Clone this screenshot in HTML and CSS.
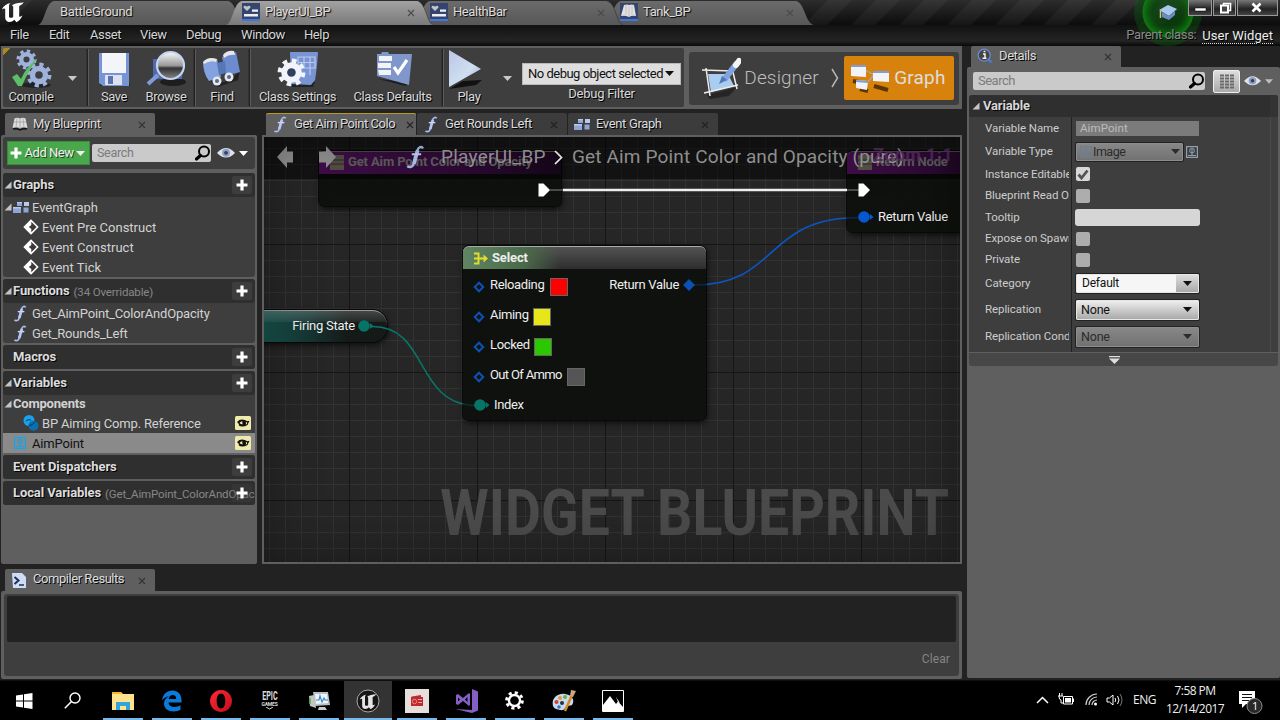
FILE: index.html
```html
<!DOCTYPE html>
<html lang="en">
<head>
<meta charset="utf-8">
<title>PlayerUI_BP</title>
<link rel="stylesheet" href="styles.css">
</head>
<body>
<svg class="defs" width="0" height="0">
  <defs>
    <linearGradient id="gTab" x1="0" y1="0" x2="0" y2="1"><stop offset="0" stop-color="#6b6b6b"/><stop offset="1" stop-color="#575757"/></linearGradient>
    <linearGradient id="gTabOn" x1="0" y1="0" x2="0" y2="1"><stop offset="0" stop-color="#a2a2a2"/><stop offset="1" stop-color="#7a7a7a"/></linearGradient>
    <linearGradient id="gPlay" x1="0" y1="0" x2="1" y2="1"><stop offset="0" stop-color="#bcc6e6"/><stop offset=".6" stop-color="#cfe0f0"/><stop offset="1" stop-color="#8ea4d0"/></linearGradient>
    <linearGradient id="gLens" x1="0" y1="0" x2="0" y2="1"><stop offset="0" stop-color="#fafafa"/><stop offset=".5" stop-color="#999"/><stop offset=".6" stop-color="#333"/><stop offset="1" stop-color="#888"/></linearGradient>
    <linearGradient id="gOpera" x1="0" y1="0" x2="1" y2="1"><stop offset="0" stop-color="#ff2a36"/><stop offset="1" stop-color="#c00d1c"/></linearGradient>
    <radialGradient id="gGlow"><stop offset="0" stop-color="#041" stop-opacity=".1"/><stop offset=".6" stop-color="#064a08" stop-opacity=".5"/><stop offset="1" stop-color="#0d8a10" stop-opacity=".85"/></radialGradient>
    <linearGradient id="gWire" gradientUnits="userSpaceOnUse" x1="427" y1="0" x2="595" y2="0"><stop offset=".09" stop-color="#0a55c4" stop-opacity=".3"/><stop offset=".1" stop-color="#0a55c4"/><stop offset=".92" stop-color="#0a55c4"/><stop offset=".93" stop-color="#0a55c4" stop-opacity=".3"/></linearGradient>
    <linearGradient id="gTeal" gradientUnits="userSpaceOnUse" x1="105" y1="0" x2="212" y2="0"><stop offset=".87" stop-color="#08756a"/><stop offset=".88" stop-color="#08756a" stop-opacity=".3"/></linearGradient>
  </defs>
  <symbol id="x" viewBox="0 0 8 8"><path d="M1 1l6 6M7 1L1 7" stroke="currentColor" stroke-width="1.100" fill="none"/></symbol>
  <symbol id="down" viewBox="0 0 9 5"><path d="M0 0h9L4.500 5z" fill="currentColor"/></symbol>
  <symbol id="tri" viewBox="0 0 8 8"><path d="M7.500 .5v7h-7z" fill="#c4c4c4"/></symbol>
  <symbol id="plus" viewBox="0 0 12 12"><path d="M4.400 .5h3.200v3.900h3.900v3.200H7.600v3.900H4.400V7.600H.5V4.400h3.900z" fill="#fff"/></symbol>
  <symbol id="mag" viewBox="0 0 16 16"><circle cx="9" cy="6.500" r="5" fill="none" stroke="#000" stroke-width="2"/><path d="M5.500 10.500L1.500 14" stroke="#000" stroke-width="3.200" stroke-linecap="round"/></symbol>
  <symbol id="eye" viewBox="0 0 18 12"><path d="M0 6Q9-4 18 6Q9 15 0 6z" fill="#dfe3e6"/><circle cx="9" cy="5.800" r="4" fill="#8ea0c8"/><circle cx="9" cy="5.800" r="1.900" fill="#33405c"/></symbol>
  <symbol id="f" viewBox="0 0 14 18"><path d="M13 2.600C12 .6 9.600 1.300 8.800 4L6 14c-.8 2.800-3.200 3.200-4.800 1.800" fill="none" stroke="#a9bdf0" stroke-width="1.800"/><path d="M9 4L6.200 14" stroke="#b6c7f4" stroke-width="2.800"/><path d="M4.600 7h7" stroke="#c9d6fa" stroke-width="1.500"/></symbol>
  <symbol id="graph" viewBox="0 0 16 13"><path d="M4 1h5v4H4zM0 6h8v6H0zM10.500 6.500h5v5h-5z" fill="#8fa5d8"/><path d="M4 1h5v1.300H4zM0 6h8v1.500H0zM11 1h5v4h-5z" fill="#b9c8ee"/></symbol>
  <symbol id="event" viewBox="0 0 16 16"><path d="M8 .3L15.700 8 8 15.700.3 8z" fill="#fff"/><path d="M8.300 2.700L13.600 8l-5.300 5.300V10L5.800 8l2.500-2z" fill="#3b3b3b"/></symbol>
  <symbol id="book" viewBox="0 0 16 14"><path d="M2.500 1.500Q5 0 8 1.500 11 0 13.500 1.500L15.500 11Q11 9.500 8 11.500 5 9.500.5 11z" fill="#dedede"/><path d="M1 12q4-1 7 1 3-2 7-1" stroke="#111" stroke-width="1.500" fill="none"/><path d="M8 2v9M5 1.500L4 10M11 1.500l1 8.500M2 5h12" stroke="#999" stroke-width=".7"/></symbol>
  <symbol id="widget" viewBox="0 0 18 18"><path d="M0 0h18v18H0z" fill="#34466f"/><path d="M0 16h18v2H0z" fill="#3f76e0"/><path d="M5 8L1.500 4.500Q1.500 1.500 5 3.500 8.500 1.500 8.500 4.500z" fill="#c0c5cb"/><path d="M10 6.500h6v2.200h-6zM2 11h14v2.500H2z" fill="#eee"/></symbol>
  <symbol id="bigeye" viewBox="0 0 16 14"><rect width="16" height="14" rx="1.500" fill="#efebaa"/><path d="M2 6Q6 1.500 12.500 5.200L14.500 4.800 12.500 9Q7 12 3.500 9.200 5 9 2 6z" fill="#111"/><path d="M4.500 7q1.500-2 3-1.800-.9 2 .5 3Q6 8.500 4.500 7zM11.500 6q1 1 .5 2l-1.500.6q1.200-1 .2-2.600z" fill="#efebaa"/></symbol>
  <symbol id="img" viewBox="0 0 12 12"><path d="M.6.6h10.800v10.800H.6z" fill="none" stroke="currentColor" stroke-width="1.200"/><circle cx="6" cy="4.600" r="2.400" fill="none" stroke="currentColor"/><path d="M2 9.500h8M6 5v4.500M4.700 4h2.600" stroke="currentColor"/></symbol>
  <symbol id="ue" viewBox="0 0 24 22"><path d="M.8 8.500C2.500 5 5.500 2.700 9.500 2 8 3.200 8 4 8 5.500v9.800c0 1.700 2.200 2.100 4.200.6V6c0-1-.6-1.500-1.500-1.500 2-1.500 4.600-2.300 6.800-2.600 2-.3 3.800-.3 5.200-1-1 2.600-2.600 3-4.500 4v10.600c.8.500 2 0 3.300-1C19.700 18.500 17.500 20 15.500 21.200l-2.300-2.500c-3 3.400-9 3-9-2.200V8.500C4.200 7 3 7 .8 8.500z" fill="currentColor"/></symbol>
  <symbol id="gear" viewBox="0 0 24 24"><circle cx="12" cy="12" r="6" fill="none" stroke="currentColor" stroke-width="5"/><circle cx="12" cy="12" r="9.700" fill="none" stroke="currentColor" stroke-width="3.600" stroke-dasharray="3.810 3.810"/></symbol>
</svg>

<header class="titlebar">
  <svg class="tabshapes" width="1280" height="25">
    <g fill="#fff" opacity=".045"><path d="M12 0h20L8 25h-20zM828 0h24l-25 25h-24zM876 0h24l-25 25h-24zM924 0h24l-25 25h-24zM972 0h24l-25 25h-24zM1020 0h24l-25 25h-24zM1068 0h24l-25 25h-24zM1116 0h24l-25 25h-24zM1164 0h24l-25 25h-24z"/></g>
    <path d="M38 25C45 23 45 3 54 1H228C237 3 237 23 244 25z" fill="url(#gTab)"/>
    <path d="M605 25C612 23 612 3 621 1H796C805 3 805 23 814 25z" fill="url(#gTab)"/>
    <path d="M414 25C421 23 421 3 430 1H607C616 3 616 23 623 25z" fill="url(#gTab)"/>
    <path d="M607 1C616 3 616 23 623 25M417 1C426 3 426 23 433 25" fill="none" stroke="#3c3c3c" stroke-width=".8"/>
    <path d="M226 25C233 23 233 3 242 1H417C426 3 426 23 433 25z" fill="url(#gTabOn)"/>
  </svg>
  <svg class="uelogo" width="24" height="22"><use href="#ue"/></svg>
  <div class="wtab w1"><span>BattleGround</span></div>
  <div class="wtab w2"><svg width="18" height="18"><use href="#widget"/></svg><span>PlayerUI_BP</span><svg class="close" width="8" height="8"><use href="#x"/></svg></div>
  <div class="wtab w3"><svg width="18" height="18"><use href="#widget"/></svg><span>HealthBar</span><svg class="close" width="8" height="8"><use href="#x"/></svg></div>
  <div class="wtab w4"><svg width="18" height="18" viewBox="0 0 18 18"><path d="M0 0h18v18H0z" fill="#34466f"/><path d="M0 16h18v2H0z" fill="#3f76e0"/><path d="M4 2q3-1 5 0 3-1 5 0l2 11q-4-1-7 1-4-2-8-1z" fill="#e2e2e2"/><path d="M6 2v10M9 3v10M12 2v10" stroke="#aaa" stroke-width=".6"/></svg><span>Tank_BP</span><svg class="close" width="8" height="8"><use href="#x"/></svg></div>
  <div class="winbtns">
    <svg width="24" height="15"><path d="M6 8h11v3H6z" fill="#fff" stroke="#000" stroke-width=".5"/></svg>
    <svg width="23" height="15"><path d="M9.500 3.500h7v7h-7z" fill="none" stroke="#fff" stroke-width="1.600"/><path d="M7 5.500h7v7H7z" fill="#444" stroke="#fff" stroke-width="2"/></svg>
    <svg width="41" height="15"><path d="M14.500 3.500l8 8M22.500 3.500l-8 8" stroke="#fff" stroke-width="2.600"/></svg>
  </div>
</header>
<nav class="menubar">
  <span class="m1">File</span><span class="m2">Edit</span><span class="m3">Asset</span><span class="m4">View</span><span class="m5">Debug</span><span class="m6">Window</span><span class="m7">Help</span>
  <span class="parent">Parent class:</span><span class="uw">User Widget</span>
</nav>
<svg class="glow" width="72" height="48" viewBox="0 0 72 48"><circle cx="36" cy="12" r="34" fill="#0a6a0c" opacity=".34"/><circle cx="36" cy="12" r="25.500" fill="url(#gGlow)"/><path d="M27 10l9-5 9 4-8 7z" fill="#a9c8ee"/><path d="M30 12v5l7 3 6-5v-4l-6 5z" fill="#6a8cc0"/><path d="M28.500 11v7" stroke="#e0c080" stroke-width="1.500"/></svg>

<main class="main">
  <div class="left">
    <section class="toolrow">
      <div class="tools">
        <div class="tool t-compile"><svg width="44" height="42" viewBox="0 0 44 42"><ellipse cx="27" cy="37" rx="15" ry="3" fill="#111" opacity=".6"/><g color="#9fb2dc"><svg x="7" y="1" width="21" height="21"><use href="#gear"/></svg><svg x="17" y="14" width="26" height="26"><use href="#gear"/></svg></g><path d="M3 29l5-3 4 5Q17 19 29 10 19 23 13 38H9z" fill="#5cbf67"/></svg><span>Compile</span></div>
        <div class="arr"><svg width="9" height="5"><use href="#down"/></svg></div><i class="sep"></i>
        <div class="tool t-save"><svg width="44" height="42" viewBox="0 0 44 42"><path d="M7 34h30l1 4H9z" fill="#111" opacity=".7"/><path d="M7 5h30v33H11l-4-3z" fill="#7795d6"/><path d="M10 5h24v20H10z" fill="#f4f5f9"/><path d="M13 27h17v10H13z" fill="#dce2ef"/><path d="M16 28h5v8h-5z" fill="#5a74ae"/></svg><span>Save</span></div>
        <div class="tool t-browse"><svg width="44" height="42" viewBox="0 0 44 42"><ellipse cx="29" cy="34" rx="13" ry="4" fill="#111" opacity=".7"/><path d="M9 11l30 0-1 20H9z" fill="#4e6aab"/><path d="M14 27L4 36" stroke="#7f9bdb" stroke-width="4"/><circle cx="26.500" cy="17.500" r="13.500" fill="url(#gLens)" stroke="#c6d4f2" stroke-width="2.200"/></svg><span>Browse</span></div><i class="sep"></i>
        <div class="tool t-find"><svg width="44" height="42" viewBox="0 0 44 42"><path d="M6 30q18 12 34-8l-2 10-20 7z" fill="#111" opacity=".6"/><path d="M3 14l14-3 4 18-12 4q-6-8-6-19z" fill="#84a1e0"/><path d="M22 9l14-5 4 20-14 4z" fill="#6d8ccf"/><path d="M3 14q5-6 14-3l-1 3q-6-2-12 2zM23 7q4-5 11-4l1 4q-6-1-11 3z" fill="#e7e7e7"/><path d="M17 15l8-2 1 12-7 2z" fill="#5776b6"/><circle cx="17" cy="33" r="4.500" fill="#e4e8f0"/><circle cx="17" cy="33" r="2" fill="#5c6984"/><circle cx="29" cy="29" r="4.500" fill="#e4e8f0"/><circle cx="29" cy="29" r="2" fill="#5c6984"/></svg><span>Find</span></div><i class="sep"></i>
        <div class="tool t-cs"><svg width="44" height="42" viewBox="0 0 44 42"><path d="M12 34h27l-2 5H14z" fill="#111" opacity=".6"/><path d="M14 4h28q-1 17-3 28l-4 5-20-1z" fill="#7894d2"/><path d="M22 9h17v11H22zM22 14.500h17M28 9v11M34 9v18" stroke="#b8c9ee" stroke-width="1.200" fill="none"/><g color="#f1f4fa"><svg x="1" y="10" width="29" height="29"><use href="#gear"/></svg></g><circle cx="15.500" cy="24.500" r="4" fill="#30405c"/></svg><span>Class Settings</span></div>
        <div class="tool t-cd"><svg width="44" height="42" viewBox="0 0 44 42"><path d="M7 31l30 3-2 4z" fill="#111" opacity=".7"/><path d="M6 6h4l1-2h6l1 2h23l-3 31-32-9z" fill="#8097cb"/><path d="M8 8h13v5H8zM7 15h13v5H7zM7 22h13v5H8z" fill="#f2f4fa"/><path d="M23 19l4 6L36 12" stroke="#fff" stroke-width="3.200" fill="none"/></svg><span>Class Defaults</span></div><i class="sep"></i>
        <div class="tool t-play"><svg width="44" height="42" viewBox="0 0 44 42"><path d="M2 41l14-8 19-1-6 5z" fill="#111"/><path d="M2 2l32 19L2 39z" fill="url(#gPlay)"/></svg><span>Play</span></div>
        <div class="arr"><svg width="9" height="5"><use href="#down"/></svg></div>
        <div class="debug"><div class="dcombo"><span>No debug object selected</span><svg width="9" height="5"><use href="#down"/></svg></div><span class="dlabel">Debug Filter</span></div>
      </div>
      <div class="modes">
        <div class="designer"><svg width="42" height="42" viewBox="0 0 42 42"><path d="M8 38l30-8-8 9-19 3z" fill="#000" opacity=".4"/><path d="M9 17l20 0 6 12-23 6z" fill="#a9cdf0"/><path d="M3 13l30 1M7 11l4 28M33 11l5 21M5 36l34-8" stroke="#eee" stroke-width="1.500"/><path d="M25 23L38 6" stroke="#7fa4e0" stroke-width="6"/><path d="M37 8l3-4" stroke="#f4f4f4" stroke-width="6" stroke-linecap="round"/><path d="M20 27l3-8 5 4z" fill="#5079b8"/></svg><span>Designer</span></div>
        <svg class="chev" width="8" height="20"><path d="M1 1l5.500 9L1 19" fill="none" stroke="#b4b4b4" stroke-width="1.500"/></svg>
        <div class="graphbtn"><svg width="40" height="32" viewBox="0 0 40 32"><path d="M3 19l10 2M10 27l8 2M24 24l14 4" stroke="#5b3502" stroke-width="4"/><path d="M15 8l9 5M17 21l7-8" stroke="#aaa" stroke-width="1.200"/><path d="M1 3h15v12l-15-1zM23 9h16v11l-16-1zM6 18l12 1-1 9-11-2z" fill="#f2f3f7"/><path d="M1 3h15v2H1zM23 9h16v2H23zM6 18l12 1v2L6 20z" fill="#7f9cd8"/></svg><span>Graph</span></div>
      </div>
    </section>

    <div class="middle">
      <aside class="bp">
        <div class="tab bptab"><svg width="16" height="14"><use href="#book"/></svg><span>My Blueprint</span><svg class="close" width="8" height="8"><use href="#x"/></svg></div>
        <div class="frame bpframe">
          <div class="bptools">
            <div class="addnew"><svg width="12" height="12"><use href="#plus"/></svg><span>Add New</span><svg width="9" height="5"><use href="#down"/></svg></div>
            <div class="search"><span>Search</span><svg width="16" height="16"><use href="#mag"/></svg></div>
            <svg width="18" height="12"><use href="#eye"/></svg><svg class="white" width="9" height="5"><use href="#down"/></svg>
          </div>
          <div class="sec">
            <div class="sh"><svg width="8" height="8"><use href="#tri"/></svg><b>Graphs</b><i class="add"><svg width="12" height="12"><use href="#plus"/></svg></i></div>
            <div class="row r0"><svg class="t" width="8" height="8"><use href="#tri"/></svg><svg width="16" height="13"><use href="#graph"/></svg><span>EventGraph</span></div>
            <div class="row r1"><svg width="16" height="16"><use href="#event"/></svg><span>Event Pre Construct</span></div>
            <div class="row r1"><svg width="16" height="16"><use href="#event"/></svg><span>Event Construct</span></div>
            <div class="row r1"><svg width="16" height="16"><use href="#event"/></svg><span>Event Tick</span></div>
          </div>
          <div class="sec">
            <div class="sh"><svg width="8" height="8"><use href="#tri"/></svg><b>Functions</b><small>(34 Overridable)</small><i class="add"><svg width="12" height="12"><use href="#plus"/></svg></i></div>
            <div class="row rf"><svg width="14" height="17"><use href="#f"/></svg><span class="snug">Get_AimPoint_ColorAndOpacity</span></div>
            <div class="row rf"><svg width="14" height="17"><use href="#f"/></svg><span class="snug">Get_Rounds_Left</span></div>
          </div>
          <div class="sec"><div class="sh bare"><b>Macros</b><i class="add"><svg width="12" height="12"><use href="#plus"/></svg></i></div></div>
          <div class="sec">
            <div class="sh"><svg width="8" height="8"><use href="#tri"/></svg><b>Variables</b><i class="add"><svg width="12" height="12"><use href="#plus"/></svg></i></div>
            <div class="row comp"><svg class="t" width="8" height="8"><use href="#tri"/></svg><b>Components</b></div>
            <div class="row r1"><svg width="16" height="16" viewBox="0 0 16 16"><circle cx="6" cy="5.500" r="5.500" fill="#1ba0ea"/><circle cx="10.500" cy="10.800" r="5" fill="#0b6fae"/><path d="M3 6q2-2 5-1M6 10.500q4 0 6-4" stroke="#063a60" fill="none" stroke-width="1"/></svg><span class="snug">BP Aiming Comp. Reference</span><svg class="vis" width="16" height="14"><use href="#bigeye"/></svg></div>
            <div class="row rf sel"><svg class="im" width="12" height="12"><use href="#img"/></svg><span class="snug">AimPoint</span><svg class="vis" width="16" height="14"><use href="#bigeye"/></svg></div>
          </div>
          <div class="sec"><div class="sh bare"><b>Event Dispatchers</b><i class="add"><svg width="12" height="12"><use href="#plus"/></svg></i></div></div>
          <div class="sec"><div class="sh bare"><b>Local Variables</b><small class="local">(Get_AimPoint_ColorAndOpacity)</small><i class="add over"><svg width="12" height="12"><use href="#plus"/></svg></i></div></div>
        </div>
      </aside>

      <section class="graphcol">
        <div class="gtabs">
          <div class="tab gt on"><svg width="14" height="17"><use href="#f"/></svg><span>Get Aim Point Colo</span><svg class="close" width="8" height="8"><use href="#x"/></svg></div>
          <div class="tab gt off"><svg width="14" height="17"><use href="#f"/></svg><span>Get Rounds Left</span><svg class="close" width="8" height="8"><use href="#x"/></svg></div>
          <div class="tab gt off ev"><svg width="16" height="13"><use href="#graph"/></svg><span>Event Graph</span><svg class="close" width="8" height="8"><use href="#x"/></svg></div>
        </div>
        <div class="canvas">
          <div class="mark">WIDGET BLUEPRINT</div>
          <div class="node n-entry"><div class="nh purple"><svg width="14" height="15" viewBox="0 0 14 15"><path d="M0 0h14v15H0z" fill="#a09784"/><path d="M0 5h14M0 9h14" stroke="#5c5248" stroke-width="1"/></svg><span>Get Aim Point Color and Opacity</span></div></div>
          <div class="node n-ret"><div class="nh purple"><svg width="14" height="15" viewBox="0 0 14 15"><path d="M0 0h14v15H0z" fill="#a0a08a"/><path d="M0 5h14M0 9h14" stroke="#5c5a48" stroke-width="1"/></svg><span>Return Node</span></div><div class="rv"><svg width="16" height="12"><circle cx="6" cy="6" r="5.800" fill="#0558d0"/><path d="M12 3l3.500 3-3.500 3z" fill="#0558d0"/></svg><span>Return Value</span></div></div>
          <div class="node n-fire"><span>Firing State</span><svg width="16" height="12"><circle cx="6" cy="6" r="5.800" fill="#077468"/><path d="M12 3l3.500 3-3.500 3z" fill="#077468"/></svg></div>
          <div class="node n-sel">
            <div class="nh green"><svg width="16" height="13" viewBox="0 0 16 13"><path d="M1 1.500h4.500v10H1M1 6.500h8" stroke="#e0dc30" stroke-width="2" fill="none"/><path d="M8 6.500h3" stroke="#e0dc30" stroke-width="2"/><path d="M10.500 2.500l4.500 4-4.500 4z" fill="#e0dc30"/></svg><span>Select</span></div>
            <div class="pins">
              <div class="pin"><i class="dia"></i><span>Reloading</span><i class="sw red"></i><em>Return Value</em><i class="dia full"></i></div>
              <div class="pin"><i class="dia"></i><span>Aiming</span><i class="sw yellow"></i></div>
              <div class="pin"><i class="dia"></i><span>Locked</span><i class="sw lime"></i></div>
              <div class="pin"><i class="dia"></i><span class="ammo">Out Of Ammo</span><i class="sw gray"></i></div>
              <div class="pin idx"><svg width="16" height="12"><circle cx="6" cy="6" r="5.800" fill="#077468"/><path d="M12 3l3.500 3-3.500 3z" fill="#077468"/></svg><span>Index</span></div>
            </div>
          </div>
          <svg class="wires" width="696" height="425">
            <path d="M299 53H583" stroke="#f0f0f0" stroke-width="2.400"/>
            <path d="M286 53h13M583 53h13" stroke="#fff" stroke-opacity=".25" stroke-width="2"/>
            <path d="M430 148C515 148 500 80.500 595 80.500" fill="none" stroke="url(#gWire)" stroke-width="1.600"/>
            <path d="M108 189.500C165 189 150 267.500 212 268.500" fill="none" stroke="url(#gTeal)" stroke-width="1.500"/>
          </svg>
          <div class="crumbs">
            <svg width="60" height="22"><path d="M0 11L10 0v5.500h6v11h-6V22z" fill="#929292"/><path d="M59 11L49 0v5.500h-7v11h7V22z" fill="#929292"/></svg>
            <svg class="bigf" width="20" height="24" viewBox="0 0 14 18"><use href="#f" width="14" height="18"/></svg>
            <span class="c1">PlayerUI_BP</span>
            <svg class="cc" width="9" height="15"><path d="M1 1l6.500 6.500L1 14" fill="none" stroke="#fff" stroke-width="1.700"/></svg>
            <span class="c2">Get Aim Point Color and Opacity (pure)</span>
            <span class="zoom">Zoom 1:1</span>
          </div>
          <svg class="exec" width="560" height="14"><path d="M.5.500h5L12 7l-6.500 6.500h-5zM320.500.500h5L332 7l-6.500 6.500h-5z" fill="#fff"/></svg>
        </div>
      </section>
    </div>

    <section class="results">
      <div class="tab bptab"><svg width="14" height="15" viewBox="0 0 14 15"><path d="M0 0h10l4 4v11H1z" fill="#cfdcf6"/><path d="M2.500 4l4 3.500-4 3.500" stroke="#1c3156" stroke-width="2" fill="none"/><path d="M7 12h5" stroke="#1c3156" stroke-width="1.500"/></svg><span class="cr">Compiler Results</span><svg class="close" width="8" height="8"><use href="#x"/></svg></div>
      <div class="frame resframe"><div class="resbox"><div class="log"></div><span>Clear</span></div></div>
    </section>
  </div>

  <aside class="details">
    <div class="tab dtab"><svg width="16" height="16" viewBox="0 0 16 16"><path d="M10.500 10.500l4 4" stroke="#4e77cc" stroke-width="2.600"/><circle cx="7.200" cy="7.200" r="6" fill="#444" stroke="#6a8bd6" stroke-width="1.200"/><path d="M6 6h2v4M5.500 10.300h4M6.600 3.500h1.800" stroke="#f0f0f0" stroke-width="1.500" fill="none"/></svg><span>Details</span><svg class="close" width="8" height="8"><use href="#x"/></svg></div>
    <div class="frame dframe">
      <div class="dtop">
        <div class="search big"><span>Search</span><svg width="16" height="16"><use href="#mag"/></svg></div>
        <div class="gridbtn"><svg width="14" height="15"><path d="M0 1.500h14M0 4.500h14M0 7.500h14M0 10.500h14M0 13.500h14" stroke="#6a6a6a" stroke-width="1.800" stroke-dasharray="4 1"/></svg></div>
        <svg width="17" height="12"><use href="#eye"/></svg><svg class="lite" width="8" height="5"><use href="#down"/></svg>
      </div>
      <div class="dh"><svg width="8" height="8"><use href="#tri"/></svg><b>Variable</b></div>
      <div class="props">
        <div class="p h23"><label>Variable Name</label><div class="v"><div class="name">AimPoint</div></div></div>
        <div class="p h23"><label>Variable Type</label><div class="v"><div class="combo type"><svg width="12" height="12"><use href="#img"/></svg><span>Image</span><svg width="9" height="5"><use href="#down"/></svg></div><svg class="im2" width="12" height="12"><use href="#img"/></svg></div></div>
        <div class="p h22"><label>Instance Editable</label><div class="v"><i class="cb on"><svg width="12" height="12"><path d="M1.500 6.500l3 3.500L10.500 2.500" fill="none" stroke="#555" stroke-width="2.800"/></svg></i></div></div>
        <div class="p h21"><label>Blueprint Read Only</label><div class="v"><i class="cb"></i></div></div>
        <div class="p h22"><label>Tooltip</label><div class="v"><div class="tip"></div></div></div>
        <div class="p h21"><label>Expose on Spawn</label><div class="v"><i class="cb"></i></div></div>
        <div class="p h21"><label>Private</label><div class="v"><i class="cb"></i></div></div>
        <div class="p h26"><label>Category</label><div class="v"><div class="combo cat"><span>Default</span><svg width="9" height="5"><use href="#down"/></svg></div></div></div>
        <div class="p h27"><label>Replication</label><div class="v"><div class="combo"><span>None</span><svg width="9" height="5"><use href="#down"/></svg></div></div></div>
        <div class="p h27"><label>Replication Condition</label><div class="v"><div class="combo dis"><span>None</span><svg width="9" height="5"><use href="#down"/></svg></div></div></div>
      </div>
      <div class="expand"><svg width="11" height="8"><path d="M0 0h11v1.200H0zM0 2.500h11L5.500 8z" fill="#ddd"/></svg></div>
    </div>
  </aside>
</main>

<footer class="taskbar">
  <div class="ti"><svg width="17" height="16"><path d="M0 2.500l7-1v6H0zM8 1.300L16.500 0v7.500H8zM0 8.500h7v6l-7-1zM8 8.500h8.500V16L8 14.800z" fill="#fff"/></svg></div>
  <div class="ti srch"><svg width="17" height="17"><circle cx="11" cy="6" r="5" fill="none" stroke="#fff" stroke-width="1.400"/><path d="M7.500 9.500L.8 16.200" stroke="#fff" stroke-width="1.500"/></svg></div>
  <div class="app"><svg width="22" height="20"><path d="M0 1h9l2 2h11v16H0z" fill="#ffe28c"/><path d="M0 1h9l1 2H0z" fill="#f4b62a"/><path d="M4 19v-8h14v8h-4v-4H8v4z" fill="#2fa4dd"/></svg></div>
  <div class="app"><svg width="22" height="22"><path d="M1 10.500C2 4 6 .5 11.500.5 17 .5 20.500 4.500 20.500 10v2.500H7.500c.2 3 3 4.500 6 4.500 2.200 0 4-.5 6-1.700v4.500C17.500 21 15.500 21.500 13 21.500 7 21.500 3 18.500 3 13.500c0-3 1.700-5.500 5-7.300C5 6.500 3 7.800 1 10.500zM7.700 9h7.500c0-2.500-1.200-4-3.500-4S8 6.700 7.700 9z" fill="#0a7bdc"/></svg></div>
  <div class="app"><svg width="22" height="22"><path fill-rule="evenodd" d="M11 0a11 11 0 1 0 .01 0zM11 3.500c2.800 0 4.300 3.500 4.300 7.500s-1.500 7.500-4.300 7.500-4.300-3.500-4.300-7.500S8.200 3.500 11 3.500z" fill="url(#gOpera)"/></svg></div>
  <div class="app"><div class="epic"><b>EPIC</b><u>GAMES</u><svg width="7" height="3"><path d="M0 0l3.500 2L7 0" fill="none" stroke="#ddd"/></svg></div></div>
  <div class="app"><svg width="22" height="20"><path d="M1 5l5-1 2 13-6-2z" fill="#bfc5c0"/><path d="M5 1h15l2 13-15 1z" fill="#b9bfc4"/><path d="M7 3h12l1 9-12 1z" fill="#eef4fa"/><path d="M8 9l3 0 1-4 2 6 2-4 1 2h3" fill="none" stroke="#3a86c8" stroke-width="1.200"/><path d="M11 16h6l2 3h-9z" fill="#ccc"/><path d="M2 7v6" stroke="#5eae52" stroke-width="1.500"/></svg></div>
  <div class="app active"><svg width="24" height="24" viewBox="0 0 24 24"><circle cx="12" cy="12" r="11" fill="#161616" stroke="#aaa"/><svg x="3" y="4" width="18" height="17" color="#e4e4e4"><use href="#ue"/></svg></svg></div>
  <div class="app"><svg width="24" height="24"><path d="M0 0h24v24H0z" fill="#e6dedd"/><path d="M7 7.500l9-1.500v2h2v9H6V8z" fill="#c1272d"/><circle cx="9.500" cy="12.500" r="2.200" fill="none" stroke="#e58a8c"/><path d="M13 10.500h4M13.500 13.500h3.500" stroke="#e9b0b0" stroke-width="1.200"/></svg></div>
  <div class="app"><svg width="24" height="24"><path d="M18 0l6 2.500v19L18 24 1 20l17 1z" fill="#865fc5"/><path d="M2 6l2-1 5 4 6-5 1 1v11l-1 1-6-5-5 4-2-1zM4 8.500v4L6 10.500zM13.500 8L11 10.500l2.500 2.500z" fill="#865fc5" fill-rule="evenodd"/></svg></div>
  <div class="app"><svg width="19" height="19" viewBox="0 0 24 24"><circle cx="12" cy="12" r="7" fill="none" stroke="#fff" stroke-width="3"/><circle cx="12" cy="12" r="10" fill="none" stroke="#fff" stroke-width="3.600" stroke-dasharray="3.927 3.927"/></svg></div>
  <div class="app"><svg width="24" height="24"><path d="M1 17C-1 9 6 4 13 5s9 5 8 9-4 2-6 3-2 5-7 4-6-2-7-4z" fill="#c4dcee"/><circle cx="4.500" cy="13" r="2" fill="#d04030"/><circle cx="8" cy="9" r="2" fill="#e8963a"/><circle cx="13" cy="8" r="2" fill="#67b246"/><circle cx="10" cy="14" r="2" fill="#27303e"/><circle cx="7" cy="18" r="1.800" fill="#3f6cc8"/><path d="M13 22l7-16" stroke="#d9852a" stroke-width="2.500"/><path d="M18 7l1-6 5 1-3 6z" fill="#cda87a"/></svg></div>
  <div class="app"><svg width="22" height="22"><path d="M.5.5h21v21H.5z" fill="#000" stroke="#fff"/><path d="M1 21v-6l7-9 6 8 2-2.500 5 5.500v4z" fill="#fff"/><path d="M14 7l4 6-2-1z" fill="#fff"/></svg></div>
  <div class="tray">
    <svg width="13" height="8"><path d="M1 7l5.500-5.500L12 7" fill="none" stroke="#fff" stroke-width="1.500"/></svg>
    <svg class="y2" width="16" height="13"><path d="M5.500 3.500h9v7.500h-9z" fill="none" stroke="#fff"/><path d="M7 5h6v4.500H7zM14.500 5.500H16v3.500h-1.500z" fill="#fff"/><path d="M0 3h5M1.500 0v3M4 0v3M1 3q0 4 2 4v3h3" stroke="#fff" fill="none"/></svg>
    <svg class="y3" width="14" height="13"><path d="M1 12A11 11 0 0 1 12 1M4 12a8 8 0 0 1 8-8M7 12a5 5 0 0 1 5-5" fill="none" stroke="#ccc" stroke-width="1.200"/><circle cx="10.500" cy="11" r="1.500" fill="#fff"/></svg>
    <svg class="y4" width="17" height="14"><path d="M1 5h2.500L7 2v10L3.500 9H1z" fill="none" stroke="#fff"/><path d="M9 5q1.500 2 0 4M11.500 3q3 4 0 8" stroke="#fff" fill="none"/><path d="M14 1q4 6 0 12" stroke="#777" fill="none"/></svg>
    <span class="eng">ENG</span>
    <div class="clock"><span class="k1">7:58 PM</span><span class="k2">12/14/2017</span></div>
    <svg class="note" width="26" height="26"><path d="M1 2h16v13H8l-4 4v-4H1z" fill="#fff"/><path d="M4 5.500h10M4 8.500h10M4 11.500h7" stroke="#111"/><circle cx="16.500" cy="17" r="7.500" fill="#292929" stroke="#8a8a8a"/><text class="one" x="14" y="21">1</text></svg>
  </div>
</footer>
</body>
</html>
```
FILE: styles.css
```css
* { box-sizing: border-box; }
body { margin: 0; width: 1280px; height: 720px; overflow: hidden; display: flex; flex-direction: column; position: relative; background: #222; color: #d8d8d8; font: 13px/16px Roboto, "Liberation Sans", sans-serif; letter-spacing: -.4px; white-space: nowrap; }
.defs { position: absolute; }
svg { display: block; flex: none; }
i, em { font-style: normal; }

.titlebar { height: 25px; flex: none; display: flex; position: relative; background: linear-gradient(#2c2c2c, #0c0c0c); text-shadow: 1px 1px 1px #000; }
.tabshapes { position: absolute; left: 0; top: 0; }
.uelogo { color: #fff; position: relative; margin: 1px 0 0 1px; }
.wtab { position: relative; display: flex; align-items: center; height: 24px; gap: 5px; color: #ddd; }
.w1 { width: 217px; padding-left: 35px; letter-spacing: -.3px; }
.w2 { width: 188px; }
.w3 { width: 190px; }
.w4 { width: 189px; }
.w2, .w3 { letter-spacing: -.42px; }
.wtab .close { margin: 2px 15px 0 auto; color: #4a4a4a; }
.winbtns { display: flex; position: absolute; right: 2px; top: 0; z-index: 3; gap: 1px; }
.winbtns svg { border: 1px solid #999; border-top: 0; background: linear-gradient(#777, #222 60%, #444); height: 16px; }

.menubar { height: 21px; flex: none; display: flex; align-items: center; background: linear-gradient(#111, #242424 75%, #080808); color: #d6d6d6; text-shadow: 1px 1px 0 #000; position: relative; padding-left: 10px; padding-bottom: 2px; }
.m1 { width: 39px; } .m2 { width: 41px; } .m3 { width: 50px; } .m4 { width: 46px; } .m5 { width: 55px; } .m6 { width: 63px; }
.parent { margin-left: auto; color: #8b8b8b; letter-spacing: -.35px; margin-right: 6px; position: relative; z-index: 3; }
.uw { color: #eee; border-bottom: 1px dotted #ddd; line-height: 14px; margin: 3px 7px 0 0; letter-spacing: .05px; }
.glow { position: absolute; left: 1132px; top: 0; z-index: 2; }

.main { flex: none; height: 634px; display: flex; }
.left { width: 963px; display: flex; flex-direction: column; }
.toolrow { height: 63px; display: flex; background: #5f5f5f; padding: 2px 3px 2px 2px; width: 962px; gap: 4px; border-left: 1px solid #222; }
.tools { width: 682px; margin-right: 1px; background: linear-gradient(135deg, #a78a25 0, #a78a25 5px, transparent 5px), #3e3e3e; border-radius: 2px; display: flex; text-shadow: 1px 1px 0 #000; }
.tool { display: flex; flex-direction: column; align-items: center; }
.tool span { margin-top: -1px; }
.t-compile { width: 56px; } .t-save { width: 50px; } .t-browse { width: 54px; } .t-find { width: 52px; } .t-cs { width: 93px; } .t-cd { width: 97px; } .t-play { width: 50px; }
.arr { width: 27px; display: flex; justify-content: center; padding-top: 28px; color: #c8c8c8; }
.sep { width: 3px; background: linear-gradient(90deg, #333 1px, #222 1px 2px, #5b5b5b 2px); margin: 1px 0; }
.debug { padding-top: 15px; margin-left: 1px; width: 159px; text-align: center; }
.dcombo { height: 22px; border: 1px solid #b9b9b9; background: #dedede; color: #111; display: flex; align-items: center; text-shadow: none; padding: 0 6px 1px 5px; justify-content: space-between; letter-spacing: -.5px; }
.dlabel { display: block; margin-top: 1px; letter-spacing: -.25px; }
.modes { width: 270px; height: 53px; margin-top: 4px; background: #3e3e3e; border-radius: 3px; display: flex; align-items: center; font-size: 19px; font-weight: 300; letter-spacing: .15px; color: #bdbdbd; padding-bottom: 1px; }
.designer { display: flex; align-items: center; padding-left: 10px; gap: 3px; width: 141px; }
.designer span, .graphbtn span { padding-bottom: 1px; }
.chev { margin: 0 5px 0 1px; }
.graphbtn { width: 110px; height: 44px; background: #d8820e; border-radius: 2px; display: flex; align-items: center; padding-left: 6px; gap: 4px; font-weight: 400; color: #ddd; }

.tab { display: flex; align-items: center; height: 22px; width: 150px; background: #5f5f5f; border-radius: 2px 2px 0 0; text-shadow: 1px 1px 0 #000; color: #dcdcdc; }
.tab .close { margin: 2px 9px 0 auto; color: #333; }
.frame { background: #5f5f5f; border-radius: 2px; }
.middle { display: flex; height: 455px; padding-top: 4px; }
.bp { width: 262px; }
.bptab { margin-left: 5px; padding-left: 7px; gap: 5px; }
.cr { margin-left: 2px; letter-spacing: -.45px; padding-bottom: 2px; }
.bpframe { margin-left: 1px; width: 256px; height: 429px; padding: 2px; display: flex; flex-direction: column; gap: 2px; }
.bptools { height: 32px; background: #3e3e3e; border-radius: 3px; display: flex; align-items: center; padding-left: 4px; margin-bottom: 2px; }
.bptools > .white { margin-left: 4px; color: #fff; }
.bptools > svg:nth-child(3) { margin-left: 6px; }
.addnew { flex: none; width: 83px; height: 24px; background: #49a84c; border: 1px solid #388c3b; display: flex; align-items: center; padding: 0 4px 0 2px; color: #f0f0f0; text-shadow: 1px 1px 0 #1c441d; justify-content: space-between; letter-spacing: -.5px; }
.search { flex: none; width: 119px; height: 18px; margin-left: 2px; background: #cacaca; border-radius: 2px; display: flex; align-items: center; justify-content: space-between; padding: 0 0 0 5px; color: #7c7c7c; font-size: 12.500px; letter-spacing: -.3px; }
.sec { background: #3e3e3e; border-radius: 3px; }
.sh { height: 24px; background: #2f2f2f; border-radius: 3px; display: flex; align-items: center; padding-left: 1px; position: relative; overflow: hidden; text-shadow: 1px 1px 0 #000; color: #ddd; letter-spacing: -.1px; }
.sh b { margin-left: 1px; }
.sh.bare { padding-left: 9px; }
.sh small { font-size: 11.500px; color: #878787; margin: 2px 0 0 4px; letter-spacing: -.15px; text-shadow: none; }
.add { width: 20px; height: 18px; margin-left: auto; margin-right: 3px; background: #3d3d3d; border-radius: 2px; display: grid; place-items: center; }
.add.over { position: absolute; right: 0; background: rgba(70,70,70,.3); }
.row { height: 20px; display: flex; align-items: center; letter-spacing: 0; color: #d2d2d2; }
.row span { padding-top: 1px; }
.row .t { margin: 0 1px 0 1px; }
.r0 span { margin-left: 3px; letter-spacing: -.05px; }
.r1 { padding-left: 20px; }
.r1 span { margin-left: 3px; }
.rf { padding-left: 10px; }
.rf span { margin-left: 5px; }
.row .snug { letter-spacing: -.17px; }
.comp { height: 18px; letter-spacing: -.2px; }
.comp .t { margin-right: 1px; }
.row .vis { margin-left: auto; margin-right: 4px; }
.sel { background: #8a8a8a; color: #111; }
.im { color: #13a4ec; margin: 0 1px; }

.graphcol { width: 700px; }
.gtabs { display: flex; gap: 1px; padding-left: 4px; }
.gt { padding-left: 7px; gap: 7px; }
.gt.on { box-shadow: inset 0 1px 0 #b59b20; letter-spacing: -.45px; }
.gt.off { background: #3c3c3c; }
.gt .close { margin-right: 9px; color: #222; }
.gt.on .close { margin-left: 4px; }
.gt.ev { padding-left: 6px; gap: 6px; letter-spacing: -.35px; }
.canvas { height: 429px; border: 2px solid #5f5f5f; position: relative; overflow: hidden; background-color: #262626;
  background-image: linear-gradient(90deg, #151515 1px, transparent 1px), linear-gradient(#151515 1px, transparent 1px), linear-gradient(90deg, #323232 1px, transparent 1px), linear-gradient(#323232 1px, transparent 1px);
  background-size: 128px 128px, 128px 128px, 16px 16px, 16px 16px; background-position: 85px 107px; }
.canvas::after { content: ""; position: absolute; inset: 0; box-shadow: inset 0 0 55px rgba(0,0,0,.35); }
.mark { position: absolute; right: 11px; top: 338px; font-size: 65px; line-height: 76px; font-weight: 700; letter-spacing: 0; color: #4b4b4b; transform: scaleX(.852); transform-origin: 100% 50%; }
.wires { position: absolute; left: 0; top: 0; }
.node { position: absolute; background: rgba(13,16,13,.93); border-radius: 6px; box-shadow: 0 0 0 1px #090909, 1px 3px 6px rgba(0,0,0,.7); color: #eee; letter-spacing: -.35px; }
.nh { height: 23px; border-radius: 6px 6px 0 0; display: flex; align-items: center; font-weight: 700; }
.purple { background: linear-gradient(90deg, #7c1c8a, #561465 60%, #2a0e30); border-top: 1px solid #8a8a8a; color: #b5b5b5; padding: 0 0 2px 11px; gap: 4px; letter-spacing: -.13px; }
.green { background: linear-gradient(90deg, #5f8562, #4a6a4a 25%, rgba(60,60,60,.1) 40%), linear-gradient(#555, #2c2c2c); border-top: 1px solid #aaa; padding-left: 10px; gap: 3px; letter-spacing: -.15px; }
.n-entry { left: 55px; top: 14px; width: 242px; height: 55px; }
.n-ret { left: 583px; top: 14px; width: 140px; height: 81px; }
.rv { display: flex; align-items: center; gap: 4px; margin: 35px 0 0 11px; letter-spacing: -.3px; }
.n-fire { left: -30px; top: 173px; width: 153px; height: 32px; border-radius: 15px; background: linear-gradient(#fff3, #fff1 35%, transparent 36%), linear-gradient(90deg, #17534e 20%, #151918 75%); border-top: 1px solid #999; display: flex; align-items: center; justify-content: flex-end; padding: 0 13px 1px 0; gap: 3px; letter-spacing: -.25px; }
.n-sel { left: 199px; top: 109px; width: 243px; height: 174px; }
.pins { padding: 1px 0 0 11px; }
.pin { height: 30px; display: flex; align-items: center; }
.pin span { margin: 0 5px 0 6px; }
.pin .ammo { letter-spacing: -.65px; }
.pin em { margin-left: auto; margin-right: 6px; letter-spacing: -.3px; }
.dia { width: 8px; height: 8px; border: 2px solid #0b52b4; transform: rotate(45deg); margin: 3px 1px 0 1px; }
.dia.full { background: #0b52b4; margin: 0 13px 0 0; }
.sw { width: 18px; height: 18px; border: 1px solid #666; margin-top: 4px; }
.red { background: #fe0000; margin-left: 1px; } .yellow { background: #e6e619; margin-left: -1px; } .lime { background: #2bc800; margin-left: -1px; } .gray { background: #555; }
.idx span { margin-left: 4px; }
.crumbs { position: absolute; left: 0; top: 0; width: 696px; height: 42px; background: rgba(0,0,0,.48); display: flex; align-items: center; padding: 0 0 2px 13px; font-size: 19px; line-height: 24px; color: #9b9b9b; letter-spacing: .15px; }
.bigf { margin-left: 68px; }
.c1 { margin-left: 16px; width: 105px; letter-spacing: .25px; }
.cc { margin-left: 8px; }
.c2 { margin-left: 9px; }
.zoom { position: absolute; right: 7px; top: 6px; color: #5c3164; opacity: .8; font-weight: 700; font-size: 18px; letter-spacing: .4px; }
.exec { position: absolute; left: 274px; top: 46px; }

.results { padding-top: 5px; }
.resframe { margin-left: 1px; width: 961px; height: 88px; padding: 3px; }
.resbox { background: #3e3e3e; border-radius: 3px; height: 82px; padding: 2px 3px; text-align: right; color: #858585; font-size: 12px; }
.log { height: 46px; background: #222; border-radius: 2px; margin-bottom: 9px; }
.resbox span { margin-right: 6px; letter-spacing: .1px; }

.details { width: 313px; margin-left: 4px; }
.dtab { height: 21px; margin-left: 4px; padding: 0 0 1px 6px; gap: 6px; }
.dframe { height: 611px; padding: 2px; }
.dtop { height: 26px; display: flex; align-items: center; padding: 0 4px 2px 4px; }
.big { width: 232px; margin-left: 0; font-size: 13px; letter-spacing: -.5px; }
.gridbtn { width: 27px; height: 23px; margin: 0 4px 0 8px; border: 1px solid #efefef; border-radius: 2px; background: linear-gradient(#ddd, #aaa); display: grid; place-items: center; }
.lite { color: #bdbdbd; margin-left: 4px; }
.dh { height: 22px; background: #2f2f2f; border-radius: 3px 3px 0 0; display: flex; align-items: center; gap: 3px; padding-left: 3px; text-shadow: 1px 1px 0 #000; letter-spacing: -.15px; width: 309px; box-shadow: inset -8px 0 #333; }
.props { background: linear-gradient(90deg, transparent 102px, #222 102px 103px, transparent 103px 301px, #4a4a4a 301px 302px, transparent 302px), #3e3e3e; padding-bottom: 2px; width: 309px; }
.p { display: flex; align-items: center; }
.h21 { height: 21px; } .h22 { height: 22px; } .h23 { height: 23px; } .h26 { height: 26px; } .h27 { height: 27px; }
.p label { width: 100px; padding: 0 0 1px 16px; overflow: hidden; font-size: 11.500px; letter-spacing: -.08px; color: #ccc; }
.v { padding-left: 7px; display: flex; align-items: center; gap: 3px; }
.name { width: 123px; height: 15px; background: #7b7b7b; font-size: 11.500px; letter-spacing: .1px; line-height: 15px; padding-left: 4px; color: #bbb; }
.cb { width: 14px; height: 14px; background: #adadad; border-radius: 2px; display: grid; place-items: center; }
.cb.on { background: #d8d8d8; }
.tip { width: 125px; height: 17px; margin-left: -1px; border-radius: 3px; background: #d6d6d6; }
.combo { width: 123px; height: 20px; border: 1px solid #e6e6e6; border-radius: 1px; box-shadow: 0 0 0 1px #222; background: linear-gradient(#ededed, #aaa); display: flex; align-items: center; justify-content: space-between; padding: 0 6px 0 4px; color: #111; font-size: 12.500px; letter-spacing: -.2px; }
.combo.cat { height: 19px; background: linear-gradient(90deg, #f6f6f6 99px, transparent 99px), linear-gradient(#ddd, #aaa); padding-left: 5px; font-size: 12px; }
.combo.dis, .combo.type { background: linear-gradient(#878787, #727272); border-color: #8d8d8d; color: #2b2b2b; }
.combo.type { width: 107px; height: 18px; padding: 0 2px 0 3px; letter-spacing: -.5px; }
.combo.type span { margin-right: auto; margin-left: 1px; }
.combo.type svg:first-child { color: #6f7f90; }
.im2 { color: #8fa0b2; }
.expand { height: 13px; width: 309px; margin-top: 1px; background: #474747; border-radius: 0 0 3px 3px; display: grid; place-items: center; padding-right: 18px; }

.taskbar { height: 40px; flex: none; background: #000; display: flex; position: relative; border-top: 1px solid #081018; font-family: "Open Sans", "Noto Sans", sans-serif; }
.ti { width: 48px; display: grid; place-items: center; }
.srch { margin-right: 2px; }
.app { width: 49px; display: grid; place-items: center; position: relative; }
.app::after { content: ""; position: absolute; left: 5px; right: 4px; bottom: 0; height: 2px; background: #76b9ed; }
.app.active { background: #333; width: 48px; margin-left: 1px; }
.app.active::after { left: 0; right: 0; }
.epic { color: #ddd; display: flex; flex-direction: column; align-items: center; }
.epic b { font: 700 12px/11px Roboto, sans-serif; letter-spacing: 0; transform: scaleX(.6); margin: 0 -6px; }
.epic u { font: 700 5px/5px Roboto, sans-serif; text-decoration: none; letter-spacing: -.2px; }
.tray { margin-left: auto; display: flex; align-items: center; color: #eee; font-size: 12px; padding: 0 16px 2px 0; }
.y2 { margin-left: 9px; } .y3 { margin-left: 11px; } .y4 { margin-left: 7px; }
.eng { margin-left: 10px; letter-spacing: -.5px; }
.clock { width: 58px; margin: 0 14px 0 10px; display: flex; flex-direction: column; align-items: center; line-height: 18px; }
.k1, .k2 { letter-spacing: -.55px; }
.note { margin-top: 4px; }
.one { font-size: 11px; fill: #fff; }
```
